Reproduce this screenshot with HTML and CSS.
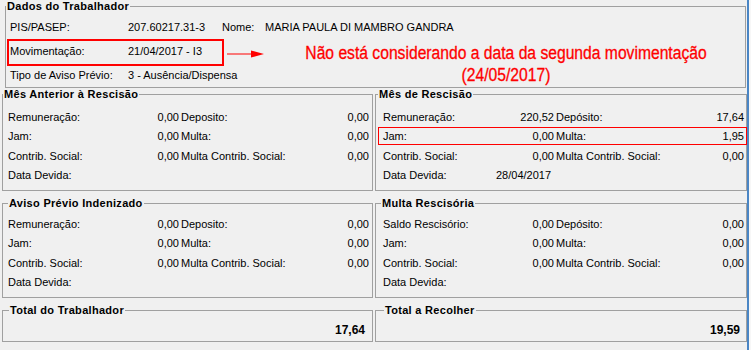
FILE: index.html
```html
<!DOCTYPE html>
<html lang="pt-BR">
<head>
  <meta charset="UTF-8">
  <title>Dados do Trabalhador</title>
  <link rel="stylesheet" href="styles.css">
</head>
<body>
  <div class="screen">
    <fieldset class="group group-main">
      <legend>Dados do Trabalhador</legend>
      <div class="info-row">
        <span>PIS/PASEP:</span><span>207.60217.31-3</span><span>Nome:</span><span>MARIA PAULA DI MAMBRO GANDRA</span>
      </div>
      <div class="info-row marked">
        <span>Movimentação:</span><span class="wide">21/04/2017 - I3</span>
      </div>
      <div class="info-row">
        <span>Tipo de Aviso Prévio:</span><span class="wide">3 - Ausência/Dispensa</span>
      </div>
    </fieldset>

    <!-- annotation over the form -->
    <svg class="arrow" width="40" height="8" viewBox="0 0 40 8">
      <line x1="1" y1="4" x2="27" y2="4" stroke="#f00" stroke-width="1"/>
      <polygon points="25,0.5 38,4 25,7.5" fill="#f00"/>
    </svg>
    <div class="note">
      <span>Não está considerando a data da segunda movimentação</span>
      <span>(24/05/2017)</span>
    </div>

    <div class="pair">
      <fieldset class="group panel">
        <legend class="legend-flush">Mês Anterior à Rescisão</legend>
        <div class="val-row"><span>Remuneração:</span><span class="num">0,00</span><span class="sub">Deposito:</span><span class="num">0,00</span></div>
        <div class="val-row"><span>Jam:</span><span class="num">0,00</span><span class="sub">Multa:</span><span class="num">0,00</span></div>
        <div class="val-row"><span>Contrib. Social:</span><span class="num">0,00</span><span class="sub">Multa Contrib. Social:</span><span class="num">0,00</span></div>
        <div class="val-row"><span>Data Devida:</span><span class="date"></span></div>
      </fieldset>
      <fieldset class="group panel panel-right">
        <legend class="legend-flush">Mês de Rescisão</legend>
        <div class="val-row"><span>Remuneração:</span><span class="num">220,52</span><span class="sub">Depósito:</span><span class="num">17,64</span></div>
        <div class="val-row marked"><span>Jam:</span><span class="num">0,00</span><span class="sub">Multa:</span><span class="num">1,95</span></div>
        <div class="val-row"><span>Contrib. Social:</span><span class="num">0,00</span><span class="sub">Multa Contrib. Social:</span><span class="num">0,00</span></div>
        <div class="val-row"><span>Data Devida:</span><span class="date">28/04/2017</span></div>
      </fieldset>
    </div>

    <div class="pair pair-mid">
      <fieldset class="group panel">
        <legend>Aviso Prévio Indenizado</legend>
        <div class="val-row"><span>Remuneração:</span><span class="num">0,00</span><span class="sub">Deposito:</span><span class="num">0,00</span></div>
        <div class="val-row"><span>Jam:</span><span class="num">0,00</span><span class="sub">Multa:</span><span class="num">0,00</span></div>
        <div class="val-row"><span>Contrib. Social:</span><span class="num">0,00</span><span class="sub">Multa Contrib. Social:</span><span class="num">0,00</span></div>
        <div class="val-row"><span>Data Devida:</span><span class="date"></span></div>
      </fieldset>
      <fieldset class="group panel panel-right">
        <legend class="legend-near">Multa Rescisória</legend>
        <div class="val-row"><span>Saldo Rescisório:</span><span class="num">0,00</span><span class="sub">Depósito:</span><span class="num">0,00</span></div>
        <div class="val-row"><span>Jam:</span><span class="num">0,00</span><span class="sub">Multa:</span><span class="num">0,00</span></div>
        <div class="val-row"><span>Contrib. Social:</span><span class="num">0,00</span><span class="sub">Multa Contrib. Social:</span><span class="num">0,00</span></div>
        <div class="val-row"><span>Data Devida:</span><span class="date"></span></div>
      </fieldset>
    </div>

    <div class="pair pair-total">
      <fieldset class="group panel">
        <legend class="legend-in">Total do Trabalhador</legend>
        <div class="total">17,64</div>
      </fieldset>
      <fieldset class="group panel panel-right">
        <legend class="legend-in">Total a Recolher</legend>
        <div class="total">19,59</div>
      </fieldset>
    </div>
  </div>
</body>
</html>
```

FILE: styles.css
```css
* {
  box-sizing: border-box;
}

body {
  margin: 0;
  background: #f7f7f7;
  font-family: "Liberation Sans", Arial, sans-serif;
  font-size: 11px;
  color: #000;
}

.screen {
  position: relative;
  width: 749px;
  height: 350px;
  overflow: hidden;
  background: #f0f0f0;
  border-right: 2px solid #4a86c5;
}

/* group boxes */
.group {
  margin: 0;
  min-width: 0;
  border: 1px solid #a0a0a0;
  padding: 0;
}

.group legend {
  font-weight: bold;
  line-height: 13px;
  padding: 0 1px;
  letter-spacing: 0.3px;
}

.group-main {
  margin-left: 5px;
  width: 741px;
  padding: 2px 4px 0;
}

.group-main legend {
  margin-left: -4px;
}

.legend-flush { margin-left: -5px; }
.legend-near { margin-left: -2px; }
.legend-in { margin-left: 1px; }

.info-row {
  display: grid;
  grid-template-columns: 118px 94px 43px auto;
  height: 24px;
  align-items: center;
  white-space: nowrap;
}

.info-row .wide {
  grid-column: 2 / -1;
}

.marked {
  position: relative;
}

.info-row.marked::after {
  content: '';
  position: absolute;
  left: -3px;
  top: 0;
  width: 213px;
  height: 23px;
  border: 2px solid #f00;
}

.val-row.marked::after {
  content: '';
  position: absolute;
  left: -5px;
  right: -3px;
  top: 0;
  height: 16px;
  border: 1px solid #f00;
}

/* annotation */
.arrow {
  position: absolute;
  left: 226px;
  top: 50px;
}

.note {
  position: absolute;
  left: 206px;
  top: 42px;
  width: 600px;
  display: flex;
  flex-direction: column;
  align-items: center;
  color: #f00;
  font-size: 18px;
  line-height: 22px;
  white-space: nowrap;
  -webkit-text-stroke: 0.3px #f00;
  transform: scaleX(0.87);
}

/* value panels */
.pair {
  display: flex;
  gap: 2px;
  padding-left: 2px;
}

.pair-mid {
  margin-top: 6px;
}

.pair-total {
  margin-top: 6px;
}

.panel {
  width: 371px;
  padding: 6px 3px 5px 5px;
}

.panel-right {
  width: 372px;
  padding-left: 7px;
  padding-right: 2px;
}

.pair-mid .panel {
  padding-top: 4px;
}

.pair-total .panel {
  padding-top: 5px;
  padding-bottom: 3px;
}

.val-row {
  display: grid;
  grid-template-columns: 111px 60px 98px 1fr;
  height: 19.5px;
  align-items: center;
  white-space: nowrap;
}

.val-row .num {
  text-align: right;
}

.val-row .sub {
  padding-left: 2px;
}

.val-row .date {
  grid-column: 2 / 4;
  padding-left: 2px;
}

.total {
  height: 16px;
  line-height: 16px;
  padding-right: 4px;
  text-align: right;
  font-weight: bold;
  font-size: 12px;
}
```
